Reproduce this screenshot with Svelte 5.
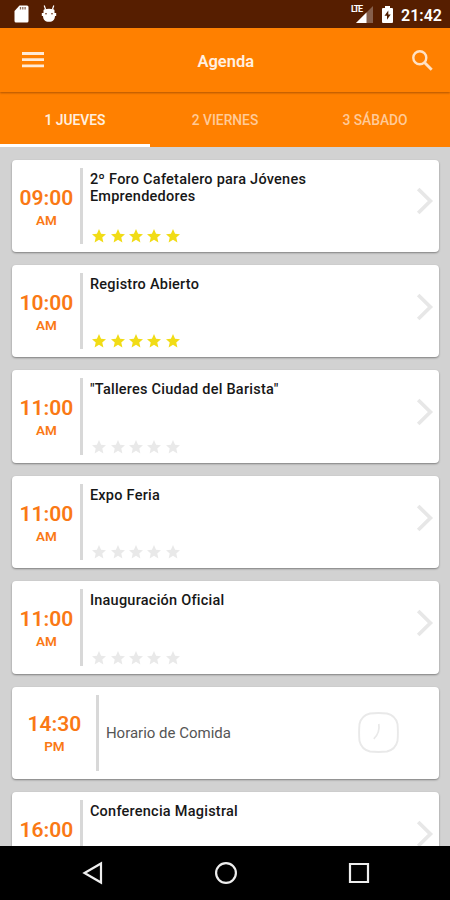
<script lang="ts">
  type Session = {
    time: string;
    period?: string;
    title: string;
    rating: number;
    pause?: boolean;
  };

  const days = ['1 JUEVES', '2 VIERNES', '3 SÁBADO'];

  const sessions: Session[] = [
    { time: '09:00', period: 'AM', title: '2º Foro Cafetalero para Jóvenes Emprendedores', rating: 5 },
    { time: '10:00', period: 'AM', title: 'Registro Abierto', rating: 5 },
    { time: '11:00', period: 'AM', title: '"Talleres Ciudad del Barista"', rating: 0 },
    { time: '11:00', period: 'AM', title: 'Expo Feria', rating: 0 },
    { time: '11:00', period: 'AM', title: 'Inauguración Oficial', rating: 0 },
    { time: '14:30', period: 'PM', title: 'Horario de Comida', rating: 0, pause: true },
    { time: '16:00', title: 'Conferencia Magistral', rating: 0 },
  ];

  let selected = $state(0);
</script>

<div class="screen">
  <div class="status">
    <svg class="sd" width="15" height="18" viewBox="0 0 15 18">
      <path d="M5.5 0.5H13a1.5 1.5 0 0 1 1.5 1.5v14a1.5 1.5 0 0 1-1.5 1.500H2A1.500 1.500 0 0 1 .5 16V6z" fill="#fff" />
      <path d="M6.500 2v2.500M8.800 2v2.500M11.100 2v2.500" stroke="#8b6a58" stroke-width="1.300" />
    </svg>
    <svg class="droid" width="16" height="18" viewBox="0 0 16 18">
      <path d="M3.200 0.500l1.400 4M12.800 0.500l-1.400 4" stroke="#fff" stroke-width="1.200" />
      <path d="M2.500 5.500Q2.500 4.500 3.500 4.300Q8 3.200 12.500 4.300Q13.500 4.500 13.500 5.500V8H15.200v3H14C13.800 14.800 12 16.800 8 16.800s-5.800-2-6-5.800H.8V8h1.700z" fill="#fff" />
      <circle cx="5" cy="8.800" r=".8" fill="#5a2000" />
      <circle cx="11" cy="8.800" r=".8" fill="#5a2000" />
    </svg>
    <div class="signal">
      <span class="lte">LTE</span>
      <svg width="17" height="17" viewBox="0 0 17 17">
        <path d="M17 0v17H0z" fill="#855f4b" />
        <path d="M10.500 6.500V17H0z" fill="#fff" />
      </svg>
    </div>
    <svg class="battery" width="11" height="17" viewBox="0 0 11 17">
      <path d="M3 0h5v2h2a1 1 0 0 1 1 1v13a1 1 0 0 1-1 1H1a1 1 0 0 1-1-1V3a1 1 0 0 1 1-1h2z" fill="#fff" />
      <path d="M6.300 4.500L2.500 9.700H5v4l3.700-5.200H6.300z" fill="#4d1c00" />
    </svg>
    <span class="clock">21:42</span>
  </div>

  <header>
    <button class="menu" aria-label="Menú">
      <svg width="22" height="16" viewBox="0 0 22 16">
        <path d="M0 1.500h22M0 7.700h22M0 13.900h22" stroke="currentColor" stroke-width="2.800" />
      </svg>
    </button>
    <h1>Agenda</h1>
    <button class="search" aria-label="Buscar">
      <svg width="21" height="21" viewBox="0 0 21 21" fill="none" stroke="currentColor">
        <circle cx="7.800" cy="7.800" r="6.500" stroke-width="2.400" />
        <path d="M12.500 12.500l7.200 7.200" stroke-width="2.900" />
      </svg>
    </button>
  </header>

  <nav>
    {#each days as day, i}
      <button class="tab" class:active={selected === i} onclick={() => (selected = i)}>{day}</button>
    {/each}
  </nav>

  <main>
    {#each sessions as s}
      <article class:pause={s.pause}>
        <div class="when">
          <span class="time">{s.time}</span>
          {#if s.period}
            <span class="period">{s.period}</span>
          {/if}
        </div>
        <div class="divider"></div>
        <div class="info">
          <h2>{s.title}</h2>
          {#if !s.pause}
            <div class="stars">
              {#each Array(5) as _, n}
                <svg class:on={n < s.rating} width="14" height="14" viewBox="0 0 15 15">
                  <path d="M7.500 0l2.200 5 5.300.5-4 3.600 1.200 5.300-4.700-2.800-4.700 2.800L4 9.100 0 5.500 5.300 5z" />
                </svg>
              {/each}
            </div>
          {/if}
        </div>
        {#if s.pause}
          <svg class="hour" width="41" height="41" viewBox="0 0 41 41" fill="none" stroke="#e9e9e9">
            <path d="M12 1.500Q20.500.6 29 1.500Q37.500 3.500 39.500 12Q40.300 20.500 39.500 29Q37.500 37.500 29 39.500Q20.500 40.400 12 39.500Q3.500 37.500 1.500 29Q.7 20.500 1.500 12Q3.500 3.500 12 1.500z" stroke-width="1.900" />
            <path d="M20.800 12c1 6-.5 10.500-5 14.800" stroke-width="1.700" />
          </svg>
        {:else}
          <svg class="chevron" width="18" height="28" viewBox="0 0 18 28" fill="none" stroke="#e7e7e7">
            <path d="M2.200 2L14.400 14 2.200 26" stroke-width="3.700" />
          </svg>
        {/if}
      </article>
    {/each}
  </main>

  <footer>
    <svg width="22" height="24" viewBox="0 0 22 24">
      <path d="M19 2.500v19L2.500 12z" />
    </svg>
    <svg width="24" height="24" viewBox="0 0 24 24">
      <circle cx="12" cy="12" r="9.900" />
    </svg>
    <svg width="22" height="22" viewBox="0 0 22 22">
      <path d="M2 2h18v18H2z" />
    </svg>
  </footer>
</div>

<style>
  :global(body) {
    margin: 0;
  }

  .screen {
    display: flex;
    flex-direction: column;
    width: 450px;
    height: 900px;
    overflow: hidden;
    background: #d2d2d2;
    font-family: Roboto, sans-serif;
  }

  .status {
    display: flex;
    align-items: center;
    flex-shrink: 0;
    box-sizing: border-box;
    height: 28px;
    padding: 0 8px 0 14px;
    background: #561e00;
    color: #fff;
  }

  .droid { margin-left: 12px; }

  .signal {
    position: relative;
    display: flex;
    width: 22px;
    margin-left: auto;
    justify-content: flex-end;
  }

  .lte {
    position: absolute;
    left: 0;
    top: -1px;
    font-size: 9px;
    line-height: 9px;
    font-weight: 700;
    letter-spacing: -1.200px;
    padding-right: 1px;
    background: #561e00;
  }

  .battery { margin-left: 9px; }

  .clock {
    margin-left: 8px;
    padding-top: 2px;
    font-size: 16px;
    font-weight: 600;
  }

  button {
    padding: 0;
    border: none;
    background: none;
    font-family: inherit;
  }

  header {
    display: flex;
    align-items: center;
    justify-content: space-between;
    flex-shrink: 0;
    box-sizing: border-box;
    height: 64px;
    padding: 0 17px 0 21.500px;
    background: #ff8000;
    color: #fff0e2;
    box-shadow: 0 1px 2px rgba(80, 30, 0, 0.45);
    z-index: 1;
  }

  header button {
    display: flex;
    color: #ffe1c4;
  }

  header .menu { color: #ffead6; }

  h1 {
    margin: 2px 4px 0 0;
    font-size: 16.500px;
    font-weight: 600;
  }

  nav {
    display: flex;
    flex-shrink: 0;
    height: 55px;
    background: #ff8000;
  }

  .tab {
    flex: 1;
    box-sizing: border-box;
    padding-top: 4px;
    border-bottom: 3px solid transparent;
    color: #ffca98;
    font-size: 13.800px;
    font-weight: 500;
  }

  .tab.active {
    border-color: #fff;
    color: #ffeede;
    font-weight: 600;
  }

  main {
    display: flex;
    flex-direction: column;
    flex: 1;
    min-height: 0;
    gap: 12.900px;
    padding: 12.600px 11.500px 0 12.400px;
    overflow: hidden;
  }

  article {
    display: flex;
    flex-shrink: 0;
    box-sizing: border-box;
    height: 92.500px;
    padding: 8px 5px 8px 0;
    border-radius: 4px;
    background: #fff;
    box-shadow: 0 1px 2px rgba(0, 0, 0, 0.4);
  }

  .when {
    display: flex;
    flex-direction: column;
    align-items: center;
    width: 68px;
    padding-top: 18px;
    box-sizing: border-box;
    color: #fa7915;
    font-weight: 600;
  }

  .time {
    font-size: 21px;
    line-height: 24px;
  }

  .period {
    margin-top: 2px;
    font-size: 13.500px;
    line-height: 16px;
  }

  .divider {
    width: 2.500px;
    background: #d8d8d8;
  }

  .info {
    display: flex;
    flex-direction: column;
    justify-content: space-between;
    flex: 1;
    padding: 3px 0 1px 7px;
  }

  h2 {
    max-width: 250px;
    margin: 0;
    color: #171717;
    font-size: 14.500px;
    line-height: 17.500px;
    font-weight: 500;
    letter-spacing: 0.240px;
  }

  .stars {
    display: flex;
    gap: 4.400px;
    padding-left: 2.300px;
  }

  .stars svg { fill: #e9e9e9; }

  .stars .on { fill: #f1dc16; }

  .chevron {
    align-self: center;
    margin-top: -9px;
  }

  .pause .when {
    width: 84px;
    padding-top: 17px;
  }

  .pause .info {
    justify-content: center;
    padding-top: 2px;
  }

  .pause h2 {
    color: #555;
    font-size: 15px;
    font-weight: 400;
    letter-spacing: 0;
  }

  .hour {
    align-self: center;
    margin-right: 35px;
  }

  footer {
    display: flex;
    align-items: center;
    justify-content: space-between;
    flex-shrink: 0;
    box-sizing: border-box;
    height: 54px;
    padding: 0 80px 0 81.500px;
    background: #000;
    z-index: 1;
  }

  footer svg {
    fill: none;
    stroke: #eee;
    stroke-width: 2.200;
  }
</style>
